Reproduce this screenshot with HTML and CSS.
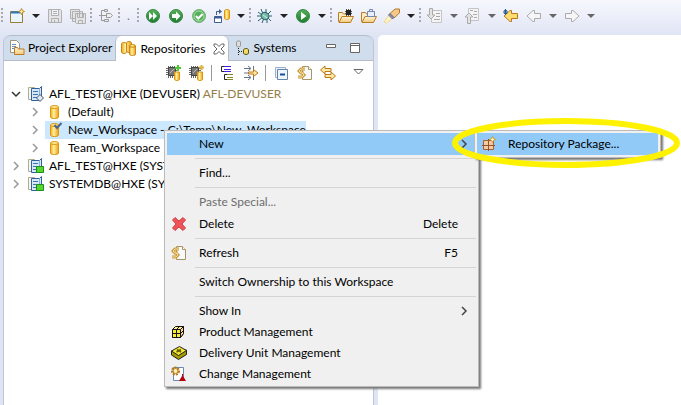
FILE: index.html
```html
<!DOCTYPE html>
<html lang="en">
<head>
<meta charset="utf-8">
<title>Repositories</title>
<link rel="stylesheet" href="styles.css">
</head>
<body>
<svg class="defs" aria-hidden="true">
  <defs>
    <linearGradient id="gold" x1="0" x2="1"><stop offset="0" stop-color="#f0a818"/><stop offset=".4" stop-color="#fff0a0"/><stop offset="1" stop-color="#f0a010"/></linearGradient>
    <linearGradient id="folder" x1="0" x2="0" y1="0" y2="1"><stop offset="0" stop-color="#fff4d4"/><stop offset="1" stop-color="#f3c97c"/></linearGradient>
    <linearGradient id="green" x1="0" x2="0" y1="0" y2="1"><stop offset="0" stop-color="#58b058"/><stop offset="1" stop-color="#1c7c30"/></linearGradient>
    <symbol id="caret" viewBox="0 0 8 16"><path d="M0 6h8L4 10z" fill="currentColor"/></symbol>
    <symbol id="cyl" viewBox="0 0 16 16"><path d="M3.500 3v10c0 2 8 2 8 0V3" fill="url(#gold)" stroke="#dc960e"/><ellipse cx="7.500" cy="3" rx="4" ry="1.500" fill="#ffe98c" stroke="#d99510"/></symbol>
    <symbol id="server" viewBox="0 0 16 16"><path d="M.5 1.500h6v2H4v10H.5z" fill="#f6f4ee" stroke="#b5aa90"/><path d="M3.500 2.500h8l2-2v11l-2 3h-8z" fill="#d5e8fa" stroke="#31619b"/><path d="M5 5.500h5M5 8.500h5M5 11.500h4" stroke="#3e71ad"/><path d="M11.500 2.500v11" stroke="#8aaed1"/></symbol>
    <symbol id="chip" viewBox="0 0 16 16"><path d="M0 3.500h12M0 5.500h12M0 7.500h12M0 9.500h12M2.500 1v12M4.500 1v12M6.500 1v12M8.500 1v12" stroke="#666"/><path d="M2.500 2.500h7v8h-7z" fill="#777" stroke="#444"/><path d="M4 8l4-4" stroke="#bbb"/><path d="M8.500 7v7c0 2 5 2 5 0V7z" fill="url(#gold)" stroke="#d99510"/></symbol>
    <symbol id="refresh" viewBox="0 0 16 16"><path d="M5.500 1.500h6l3 3v10h-9z" fill="#f7f9fd" stroke="#a89662"/><path d="M11.500 1.500v3h3" fill="#fff" stroke="#a89662"/><path d="M8 4H4L2 6l2 2h3M1 12h4l2-2-2-2" fill="none" stroke="#c99a3a" stroke-width="3"/><path d="M8 4H4L2 6l2 2h3M1 12h4l2-2-2-2" fill="none" stroke="#f7dda0"/></symbol>
    <symbol id="back" viewBox="0 0 16 16"><path d="M1 8l6-5.500h1.500v3h6v5h-6v3H7z"/></symbol>
    <symbol id="opened" viewBox="0 0 16 16"><path d="M.5 13.500v-9h4l1 1.500h7v7.500z" fill="#ffedc2" stroke="#bb7b25"/><path d="M1 14.500l3-6h11.500l-3 6z" fill="url(#folder)" stroke="#bb7b25"/></symbol>
    <symbol id="more" viewBox="0 0 8 10"><path d="M2 1l4 4-4 4" fill="none" stroke="currentColor" stroke-width="1.500"/></symbol>
  </defs>
</svg>

<div class="toolbar" role="toolbar" aria-label="Main">
  <span class="grip"></span>
  <button class="tool" aria-label="New"><svg viewBox="0 0 16 16"><path d="M1.500 3.500h12v11h-12z" fill="#e8f5ff" stroke="#9a7d3c"/><path d="M2 4.500h9" stroke="#2d79bd" stroke-width="2"/><path d="M12.500 .5l1 2 2 1-2 1-1 2-1-2-2-1 2-1z" fill="#fce8a0" stroke="#b98a25"/></svg></button>
  <button class="drop" aria-label="New options"><svg><use href="#caret"/></svg></button>
  <button class="tool" aria-label="Save" disabled><svg viewBox="0 0 16 16" fill="#e4e4e6" stroke="#b0b0b0"><path d="M1.500 1.500h12l1 1v12h-13zM4.500 1.500v6h7v-6M4.500 14.500v-4h7v4"/><path d="M6 3.500h4M6 5.500h4M7.500 12v2"/></svg></button>
  <button class="tool" aria-label="Save all" disabled><svg viewBox="0 0 16 16" fill="#e4e4e6" stroke="#b0b0b0"><path d="M.5 1.500h9v9h-9zM2.500 3.500h10v10h-10z"/><path d="M5.500 5.500h10v10h-9l-1-1zM7.500 5.500v4h6v-4M8.500 15.500v-3h4v3"/></svg></button>
  <span class="grip"></span>
  <button class="tool" aria-label="Link" disabled><svg viewBox="0 0 16 16" fill="#eee" stroke="#999"><path d="M7 2.500H3.500v10H6M1 7.500h8" fill="none"/><path d="M6.500 1.500h3v2h-3zM6.500 11.500h4v2h-4zM8.500 5.500h4l2 2-2 2h-4z"/></svg></button>
  <span class="grip"></span>
  <span class="dot">.</span>
  <span class="grip"></span>
  <button class="tool" aria-label="Activate all"><svg viewBox="0 0 16 16"><circle cx="8" cy="8" r="6.500" fill="url(#green)" stroke="#388844"/><path d="M4 4l4 4-4 4zM8 4l4 4-4 4z" fill="#fff"/></svg></button>
  <button class="tool" aria-label="Activate"><svg viewBox="0 0 16 16"><circle cx="8" cy="8" r="6.500" fill="url(#green)" stroke="#388844"/><path d="M4 6h4V3.500L12.500 8 8 12.500V10H4z" fill="#fff"/></svg></button>
  <button class="tool" aria-label="Check"><svg viewBox="0 0 16 16"><circle cx="8" cy="8" r="6.500" fill="#51af58" stroke="#78b57a"/><circle cx="8" cy="8" r="5" fill="none" stroke="#b5dfb5"/><path d="M5 8l2.300 2.500L11.500 6" fill="none" stroke="#fff" stroke-width="2"/></svg></button>
  <button class="tool" aria-label="Transfer"><svg viewBox="0 0 16 16"><path d="M.5 8.500h7v6h-7z" fill="#fff" stroke="#3e5d91"/><path d="M1 9.500h6" stroke="#3e5d91" stroke-width="2"/><path d="M2.500 7V3.500H6" stroke="#3e5d91" fill="none"/><path d="M5 1l3 2.500L5 6z" fill="#3e5d91"/><path d="M10.500 3v7c0 2 5 2 5 0V3c0-2-5-2-5 0z" fill="url(#gold)" stroke="#d99510"/></svg></button>
  <button class="drop" aria-label="Transfer options"><svg><use href="#caret"/></svg></button>
  <span class="grip"></span>
  <button class="tool" aria-label="Debug"><svg viewBox="0 0 16 16"><path d="M4 1l2 5M9 1v5M14 3l-4 4M1 4l4 3M0 8h5M1 13l5-4M5 15l2-5M10 15V9M14 13l-4-4M15 8h-5" stroke="#28606c"/><ellipse cx="8" cy="8" rx="4" ry="3.500" transform="rotate(35 8 8)" fill="#78bba6" stroke="#28606c"/><path d="M6 7l4 3" stroke="#d4efdc"/></svg></button>
  <button class="drop" aria-label="Debug options"><svg><use href="#caret"/></svg></button>
  <button class="tool" aria-label="Run"><svg viewBox="0 0 16 16"><circle cx="8" cy="8" r="6.500" fill="url(#green)" stroke="#388844"/><path d="M6 4l5.500 4L6 12z" fill="#fff"/></svg></button>
  <button class="drop" aria-label="Run options"><svg><use href="#caret"/></svg></button>
  <span class="grip"></span>
  <button class="tool" aria-label="Open development object"><svg viewBox="0 0 16 16"><use href="#opened"/><path d="M7 3.500h7M7 5.500h7M8.500 1v7M10.500 1v7M12.500 1v7" stroke="#555"/><path d="M8 2h5v5H8z" fill="#222"/></svg></button>
  <button class="tool" aria-label="Open task"><svg viewBox="0 0 16 16"><use href="#opened"/><path d="M6.500 3.500h7v5h-7z" fill="#e9effa" stroke="#7187b4"/><path d="M8.500 3V1.500h3V3" fill="none" stroke="#7187b4"/></svg></button>
  <button class="tool" aria-label="Search"><svg viewBox="0 0 16 16"><path d="M0 14l5-7 4 3-6.500 5z" fill="#fff5c8" stroke="#eed88b"/><path d="M6 5.500L11 1h4.500v4L10 10z" fill="#f6c987" stroke="#b57930"/><path d="M4.500 7L6 5.500 10 9.500 8.500 11z" fill="#8d92b4" stroke="#696c93"/></svg></button>
  <button class="drop" aria-label="Search options"><svg><use href="#caret"/></svg></button>
  <span class="grip"></span>
  <button class="tool" aria-label="Next annotation" disabled><svg viewBox="0 0 16 16"><path d="M4.500 2.500h10v12h-10z" fill="#f4f4f6" stroke="#c4c4c4"/><path d="M9 5.500h4M9 8.500h4M7 11.500h6" stroke="#aaa"/><path d="M2.500.5h3V7H8l-4 4-4-4h2.500z" fill="#e4e4e4" stroke="#aaa"/></svg></button>
  <button class="drop dim" aria-label="Next annotation options"><svg><use href="#caret"/></svg></button>
  <button class="tool" aria-label="Previous annotation" disabled><svg viewBox="0 0 16 16"><path d="M3.500.5h10v12h-10z" fill="#f4f4f6" stroke="#c4c4c4"/><path d="M5 2.500h3M9 3.500h3M8 6.500h4M9 9.500h3" stroke="#aaa"/><path d="M2.500 15.500h3V9H8L4 5 0 9h2.500z" fill="#e4e4e0" stroke="#aaa"/></svg></button>
  <button class="drop dim" aria-label="Previous annotation options"><svg><use href="#caret"/></svg></button>
  <button class="tool amber" aria-label="Last edit location"><svg viewBox="0 0 16 16"><use href="#back"/><path d="M2.500 1v6M0 4h5M1 2l3 4M4 2L1 6" stroke="#26568c"/></svg></button>
  <button class="tool ghost" aria-label="Back" disabled><svg><use href="#back"/></svg></button>
  <button class="drop dim" aria-label="Back options"><svg><use href="#caret"/></svg></button>
  <button class="tool ghost flip" aria-label="Forward" disabled><svg><use href="#back"/></svg></button>
  <button class="drop dim" aria-label="Forward options"><svg><use href="#caret"/></svg></button>
</div>

<main class="workbench">
  <section class="view">
    <div class="tabs" role="tablist">
      <button class="tab" role="tab"><svg viewBox="0 0 16 16"><path d="M1.500.5h6l3 3v9h-9z" fill="#fff" stroke="#a0947a"/><path d="M3 4.500h4M3 6.500h4M3 8.500h3" stroke="#6d92bd"/><path d="M5.500 14.500v-7h3l1 1.500h5.500v5.500z" fill="url(#folder)" stroke="#bb7b25"/></svg>Project Explorer</button>
      <button class="tab active" role="tab" aria-selected="true"><svg viewBox="0 0 16 16"><path d="M.5 3v8c0 2 5 2 5 0V3c0-2-5-2-5 0zM5.500 2v8c0 2 5 2 5 0V2c0-2-5-2-5 0z" fill="url(#gold)" stroke="#c98716"/><path d="M8.500 5v8c0 2 6 2 6 0V5c0-2-6-2-6 0z" fill="url(#gold)" stroke="#c98716"/><path d="M9 5.500c0 1 5 1 5 0" fill="none" stroke="#c98716"/></svg>Repositories<svg class="close" viewBox="0 0 12 12"><path d="M1 1h2.500L6 3.500 8.500 1H11v2L8 6l3 3v2H8.500L6 8.500 3.500 11H1V9l3-3-3-3z" fill="#fff" stroke="#666"/></svg></button>
      <button class="tab" role="tab"><svg viewBox="0 0 16 16"><path d="M2.500 2v4c0 1 4 1 4 0V2c0-1.500-4-1.500-4 0z" fill="#ddd" stroke="#999"/><path d="M4.500 8v7M5 11.500h4" stroke="#222" stroke-dasharray="1 1"/><path d="M9.500 10v3c0 2 5 2 5 0v-3c0-2-5-2-5 0z" fill="#f0dc60" stroke="#5a5222"/></svg>Systems</button>
      <span class="spacer"></span>
      <button class="pane" aria-label="Minimize"><svg viewBox="0 0 12 12"><path d="M1.500 2.500h9v3h-9z" fill="#fff" stroke="#666"/></svg></button>
      <button class="pane" aria-label="Maximize"><svg viewBox="0 0 12 12"><path d="M1.500 1.500h9v9h-9zM1.500 3.500h9" fill="#fff" stroke="#666"/></svg></button>
    </div>

    <div class="viewbar" role="toolbar" aria-label="Repositories">
      <button class="tool" aria-label="Create workspace"><svg viewBox="0 0 16 16"><use href="#chip"/><path d="M12 0v6M9 3h6" stroke="#50c830" stroke-width="2"/></svg></button>
      <button class="tool" aria-label="Import workspace"><svg viewBox="0 0 16 16"><use href="#chip"/><path d="M12.500 0v5M10 2.500h5" stroke="#dcb640" stroke-width="2"/></svg></button>
      <span class="rule"></span>
      <button class="tool" aria-label="Hierarchy"><svg viewBox="0 0 16 16"><path d="M4 1.500H1.500v5H4M7 9.500H4.500v5H7" fill="none" stroke="#222"/><path d="M4 1.500h7M4 4.500h7M4 6.500h7" stroke="#4a20e0"/><path d="M7 9.500h6M7 12.500h6M7 14.500h6" stroke="#8a8620"/></svg></button>
      <button class="tool" aria-label="Filter"><svg viewBox="0 0 16 16"><path d="M1 3.500h6M1 12.500h6M1 8h4M5 1l3 2.500L5 6M5 10l3 2.500L5 15M10.500 1v4M10.500 11v4" fill="none" stroke="#667087"/><path d="M5.500 7h5V4.500L15 8l-4.500 3.500V9h-5z" fill="#ffe8a2" stroke="#b8781d"/></svg></button>
      <span class="rule"></span>
      <button class="tool" aria-label="Collapse all"><svg viewBox="0 0 16 16"><path d="M1.500 2.500h10v10h-10z" fill="#e8f0fa" stroke="#9db1cc"/><path d="M3.500 4.500h10v10h-10z" fill="#eef7ff" stroke="#6484ac"/><path d="M6 9.500h5" stroke="#174f9b" stroke-width="2"/></svg></button>
      <button class="tool" aria-label="Refresh"><svg><use href="#refresh"/></svg></button>
      <button class="tool" aria-label="Link with editor"><svg viewBox="0 0 16 16" fill="#ffe8a2" stroke="#b8781d"><path d="M.5 5L5 1v2.500h6v3H5V9zM15.500 11L11 7v2.500H5v3h6V15z"/></svg></button>
      <button class="tool menu-button" aria-label="View menu"><svg viewBox="0 0 16 16"><path d="M4 4.500h9L8.500 9z" fill="#fff" stroke="#666"/></svg></button>
    </div>

    <ul class="tree" role="tree">
      <li class="row open"><svg class="twist"><use href="#more"/></svg><svg class="icon" viewBox="0 0 16 16"><use href="#server"/><path d="M12 8.500l3.500 3.500-3.500 3.500L8.500 12z" fill="#dce8f4" stroke="#495668"/></svg><span>AFL_TEST@HXE (DEVUSER) <span class="note">AFL-DEVUSER</span></span></li>
      <li class="row child"><svg class="twist"><use href="#more"/></svg><svg class="icon"><use href="#cyl"/></svg><span>(Default)</span></li>
      <li class="row child selected"><svg class="twist"><use href="#more"/></svg><svg class="icon" viewBox="0 0 16 16"><use href="#cyl"/><path d="M7.500 3l2.500 3 4.500-5" fill="none" stroke="#4c6689" stroke-width="2"/></svg><span>New_Workspace - C:\Temp\New_Workspace</span></li>
      <li class="row child"><svg class="twist"><use href="#more"/></svg><svg class="icon"><use href="#cyl"/></svg><span>Team_Workspace</span></li>
      <li class="row"><svg class="twist"><use href="#more"/></svg><svg class="icon" viewBox="0 0 16 16"><use href="#server"/><path d="M8.500 8.500h7v6h-7z" fill="#55d82d" stroke="#218c20"/></svg><span>AFL_TEST@HXE (SYSTEM)</span></li>
      <li class="row"><svg class="twist"><use href="#more"/></svg><svg class="icon" viewBox="0 0 16 16"><use href="#server"/><path d="M8.500 8.500h7v6h-7z" fill="#55d82d" stroke="#218c20"/></svg><span>SYSTEMDB@HXE (SYSTEM)</span></li>
    </ul>
  </section>
  <section class="editor"></section>
</main>

<div class="menu context" role="menu">
  <button class="item hot" role="menuitem"><span class="pic"></span><span class="text">New</span><svg class="arrow"><use href="#more"/></svg></button>
  <hr>
  <button class="item" role="menuitem"><span class="pic"></span><span class="text">Find...</span></button>
  <hr>
  <button class="item" role="menuitem" disabled><span class="pic"></span><span class="text">Paste Special...</span></button>
  <button class="item" role="menuitem"><span class="pic"><svg viewBox="0 0 16 16"><path d="M1.500 4l2.500-2.500L8 5l4-3.500L14.500 4 11 8l3.500 4-2.500 2.500L8 11l-4 3.500L1.500 12 5 8z" fill="#ee535a" stroke="#cf4145"/></svg></span><span class="text">Delete</span><span class="key">Delete</span></button>
  <hr>
  <button class="item" role="menuitem"><span class="pic"><svg><use href="#refresh"/></svg></span><span class="text">Refresh</span><span class="key">F5</span></button>
  <hr>
  <button class="item" role="menuitem"><span class="pic"></span><span class="text">Switch Ownership to this Workspace</span></button>
  <hr>
  <button class="item short" role="menuitem"><span class="pic"></span><span class="text">Show In</span><svg class="arrow"><use href="#more"/></svg></button>
  <button class="item short" role="menuitem"><span class="pic"><svg viewBox="0 0 16 16"><path d="M1.500 5.500l3-3h8v7l-3 4h-8z" fill="#fbf08a" stroke="#111"/><path d="M9.500 5.500l3-3v7l-3 4z" fill="#ffd0a0" stroke="#111"/><path d="M1.500 5.500h8v8h-8z" fill="#f8ea30" stroke="#111"/><path d="M5.500 5.500v8M1.500 9.500h8M5.500 5.500l3-3M9.500 9.500l3-3" fill="none" stroke="#111"/></svg></span><span class="text">Product Management</span></button>
  <button class="item short" role="menuitem"><span class="pic"><svg viewBox="0 0 16 16"><path d="M.5 6v4l7 4.500 8-5V5z" fill="#a49a00" stroke="#222"/><path d="M.5 6l8-4.500 7 4-8 5z" fill="#f3e836" stroke="#222"/><path d="M6 4.500l4 2.500M10 4.500L5.500 7" stroke="#655e00" stroke-width="1.500"/></svg></span><span class="text">Delivery Unit Management</span></button>
  <button class="item short" role="menuitem"><span class="pic"><svg viewBox="0 0 16 16"><path d="M2.500 1.500h10v13h-10z" fill="#fff" stroke="#6c89b4"/><circle cx="4.500" cy="5" r="3.500" fill="none" stroke="#b77916" stroke-width="2" stroke-dasharray="2 1"/><circle cx="4.500" cy="5" r="2.500" fill="#fff0bf" stroke="#b77916"/><path d="M11 8h1v2l3 5H8l3-5z" fill="#b8000b"/></svg></span><span class="text">Change Management</span></button>
</div>

<div class="menu submenu" role="menu">
  <button class="item hot" role="menuitem"><span class="pic"><svg viewBox="0 0 16 16"><path d="M2.500 4.500h10v9h-10z" fill="#f7c9a1" stroke="#a1633a"/><path d="M7.500 3v12M1 9.500h13" stroke="#915329"/><path d="M11.500 .5l1 2 2 1-2 1-1 2-1-2-2-1 2-1z" fill="#fff5b5" stroke="#c99a35"/></svg></span><span class="text">Repository Package...</span></button>
</div>
<svg class="ring" viewBox="0 0 228 52" aria-hidden="true"><ellipse cx="114" cy="26" rx="111" ry="22" fill="none" stroke="#fff200" stroke-width="6"/></svg>
</body>
</html>
```
FILE: styles.css
```css
* { box-sizing: border-box; }

body {
  margin: 0;
  min-height: 100vh;
  display: flex;
  flex-direction: column;
  overflow: hidden;
  background: #e0e5f5;
  color: #000;
  font: 12px/18px Lato, "Open Sans", sans-serif;
}

button {
  margin: 0;
  padding: 0;
  border: 0;
  background: none;
  color: inherit;
  font: inherit;
  text-align: left;
}

svg { display: block; flex: none; width: 16px; height: 16px; }
.defs { position: absolute; width: 0; height: 0; }

.toolbar {
  display: flex;
  align-items: center;
  height: 35px;
  padding-bottom: 3px;
  background: linear-gradient(#f7f8fd, #e0e5f5);
}
.tool { flex: none; width: 23px; padding-left: 4px; }
.drop { flex: none; width: 15px; padding-left: 4px; color: #222; }
.drop svg { width: 8px; }
.drop.dim { color: #666; }
.grip {
  flex: none;
  width: 5px;
  height: 16px;
  background: repeating-linear-gradient(#a8a8ae 0 2px, transparent 2px 4px) 1px 0 / 2px 100% no-repeat;
}
.dot { width: 14px; padding-left: 5px; color: #777; }
.amber { fill: #ffdc70; stroke: #b8781d; }
.ghost { fill: #f6f6f8; stroke: #aaa; }
.flip svg { transform: scaleX(-1); }

.workbench { flex: 1; display: flex; gap: 4px; padding-left: 3px; }
.view {
  width: 371px;
  border: 1px solid #c0c4d4;
  border-width: 0 1px;
  border-radius: 7px 7px 0 0;
  background: #fff;
}
.editor { flex: 1; border-radius: 5px 0 0 0; background: #fff; }

.tabs {
  display: flex;
  height: 26px;
  border: 1px solid #b8bcc8;
  border-width: 1px 0;
  border-radius: 7px 7px 0 0;
  background: #cfdded;
}
.tab { display: flex; align-items: center; gap: 3px; padding: 0 3px 0 5px; }
.tab.active {
  margin-bottom: -1px;
  border: 1px solid #b8bcc8;
  border-width: 0 1px;
  border-radius: 6px 6px 0 0;
  background: #fff;
}
.tab .close { width: 12px; height: 12px; margin-left: 5px; }
.spacer { flex: 1; }
.pane { width: 24px; }
.pane svg { width: 12px; height: 12px; }

.viewbar { display: flex; align-items: center; justify-content: flex-end; height: 24px; padding-right: 3px; }
.rule { width: 1px; height: 16px; margin: 0 4px 0 3px; background: #999; }
.menu-button { width: 31px; padding-left: 11px; }

.tree { margin: 0; padding: 0; list-style: none; }
.row { display: flex; align-items: center; height: 18px; padding-left: 8px; white-space: nowrap; }
.row.child { padding-left: 27px; }
.twist { width: 8px; height: 10px; margin-right: 8px; color: #999; }
.open .twist { color: #333; transform: rotate(90deg); }
.icon { margin-right: 5px; }
.note { color: #957d47; }
.selected { width: 302px; background: linear-gradient(#cce8ff, #cce8ff) 41px 0 no-repeat; }

.menu {
  position: absolute;
  border: 1px solid #bbb;
  padding: 2px;
  background: #f0f0f0;
  box-shadow: 2px 2px 2px #777;
}
.context { left: 164px; top: 130px; width: 315px; }
.submenu { left: 474px; top: 130px; width: 187px; }
.item { display: flex; align-items: center; width: 100%; height: 22px; }
.item.short { height: 21px; }
.item:disabled { color: #6d6d6d; }
.item.hot { background: #91c9f7; }
.pic { flex: none; width: 32px; padding-left: 4px; }
.submenu .pic { width: 31px; }
.text { flex: 1; white-space: nowrap; }
.key { padding-right: 18px; }
.arrow { width: 8px; height: 10px; margin-right: 8px; color: #444; }
.menu hr { height: 1px; margin: 3px 0 3px 28px; border: 0; background: #d4d4d4; }

.ring { position: absolute; left: 452px; top: 117px; width: 228px; height: 52px; }
```
